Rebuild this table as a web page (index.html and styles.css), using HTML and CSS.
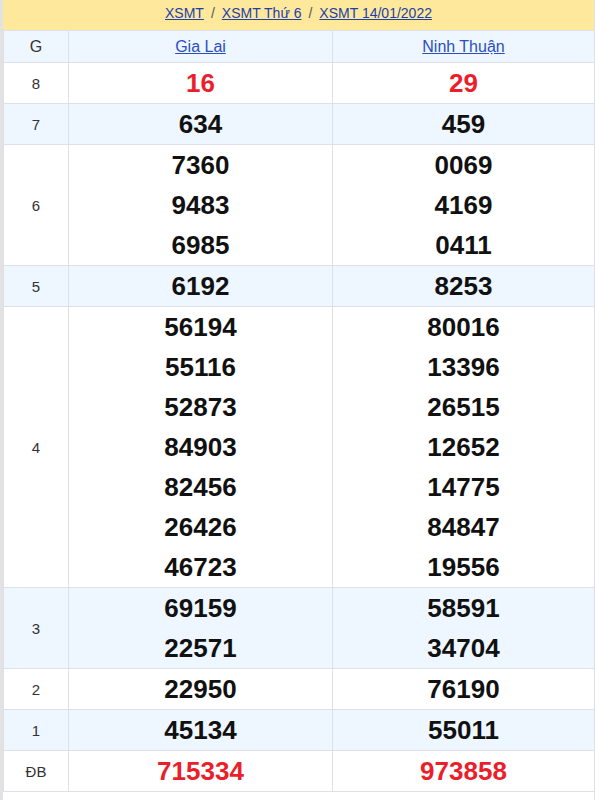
FILE: index.html
```html
<!DOCTYPE html>
<html lang="vi">
<head>
<meta charset="utf-8">
<link rel="stylesheet" href="styles.css">
</head>
<body>
<div class="page">
  <div class="crumb">
    <a href="#">XSMT</a><span class="sep">/</span><a href="#">XSMT Thứ 6</a><span class="sep">/</span><a href="#">XSMT 14/01/2022</a>
  </div>
  <table class="kq">
    <colgroup><col class="c1"><col class="c2"><col class="c3"></colgroup>
    <tr class="head alt">
      <td class="g">G</td>
      <td><a href="#">Gia Lai</a></td>
      <td><a href="#">Ninh Thuận</a></td>
    </tr>
    <tr>
      <td class="g">8</td>
      <td><div class="n red">16</div></td>
      <td><div class="n red">29</div></td>
    </tr>
    <tr class="alt">
      <td class="g">7</td>
      <td><div class="n">634</div></td>
      <td><div class="n">459</div></td>
    </tr>
    <tr>
      <td class="g">6</td>
      <td><div class="n">7360</div><div class="n">9483</div><div class="n">6985</div></td>
      <td><div class="n">0069</div><div class="n">4169</div><div class="n">0411</div></td>
    </tr>
    <tr class="alt">
      <td class="g">5</td>
      <td><div class="n">6192</div></td>
      <td><div class="n">8253</div></td>
    </tr>
    <tr>
      <td class="g">4</td>
      <td><div class="n">56194</div><div class="n">55116</div><div class="n">52873</div><div class="n">84903</div><div class="n">82456</div><div class="n">26426</div><div class="n">46723</div></td>
      <td><div class="n">80016</div><div class="n">13396</div><div class="n">26515</div><div class="n">12652</div><div class="n">14775</div><div class="n">84847</div><div class="n">19556</div></td>
    </tr>
    <tr class="alt">
      <td class="g">3</td>
      <td><div class="n">69159</div><div class="n">22571</div></td>
      <td><div class="n">58591</div><div class="n">34704</div></td>
    </tr>
    <tr>
      <td class="g">2</td>
      <td><div class="n">22950</div></td>
      <td><div class="n">76190</div></td>
    </tr>
    <tr class="alt">
      <td class="g">1</td>
      <td><div class="n">45134</div></td>
      <td><div class="n">55011</div></td>
    </tr>
    <tr>
      <td class="g">ĐB</td>
      <td><div class="n red">715334</div></td>
      <td><div class="n red">973858</div></td>
    </tr>
  </table>
</div>
</body>
</html>
```
FILE: styles.css
```css
html, body {
  margin: 0;
  padding: 0;
  background: #ffffff;
}
body {
  font-family: "Liberation Sans", Arial, sans-serif;
  color: #333;
}
.page {
  width: 591px;
  min-height: 800px;
  border-left: 3px solid #e2e2e2;
  border-right: 1px solid #e2e2e2;
  background: #fff;
}
.crumb {
  height: 30px;
  background: #fde89c;
  display: flex;
  align-items: center;
  justify-content: center;
  font-size: 14px;
  line-height: 16px;
  padding-bottom: 5px;
  box-sizing: border-box;
}
.crumb a {
  color: #1e40a8;
  text-decoration: underline;
}
.crumb .sep {
  color: #555;
  margin: 0 7px;
}
.kq {
  width: 591px;
  border-collapse: collapse;
  table-layout: fixed;
}
.kq col.c1 { width: 65px; }
.kq col.c2 { width: 264px; }
.kq col.c3 { width: 262px; }
.kq td {
  border: 1px solid #dde1e6;
  padding: 0;
  text-align: center;
  vertical-align: middle;
}
.kq tr.alt td {
  background: #eef6ff;
}
.kq tr.head td {
  height: 31px;
  font-size: 16px;
}
.kq tr.head a {
  color: #2a4fbd;
  text-decoration: underline;
}
.kq td.g {
  font-size: 15px;
  color: #333;
}
.n {
  height: 40px;
  line-height: 40px;
  font-size: 26px;
  font-weight: bold;
  color: #111;
}
.n.red {
  color: #ea1f2b;
}
```
